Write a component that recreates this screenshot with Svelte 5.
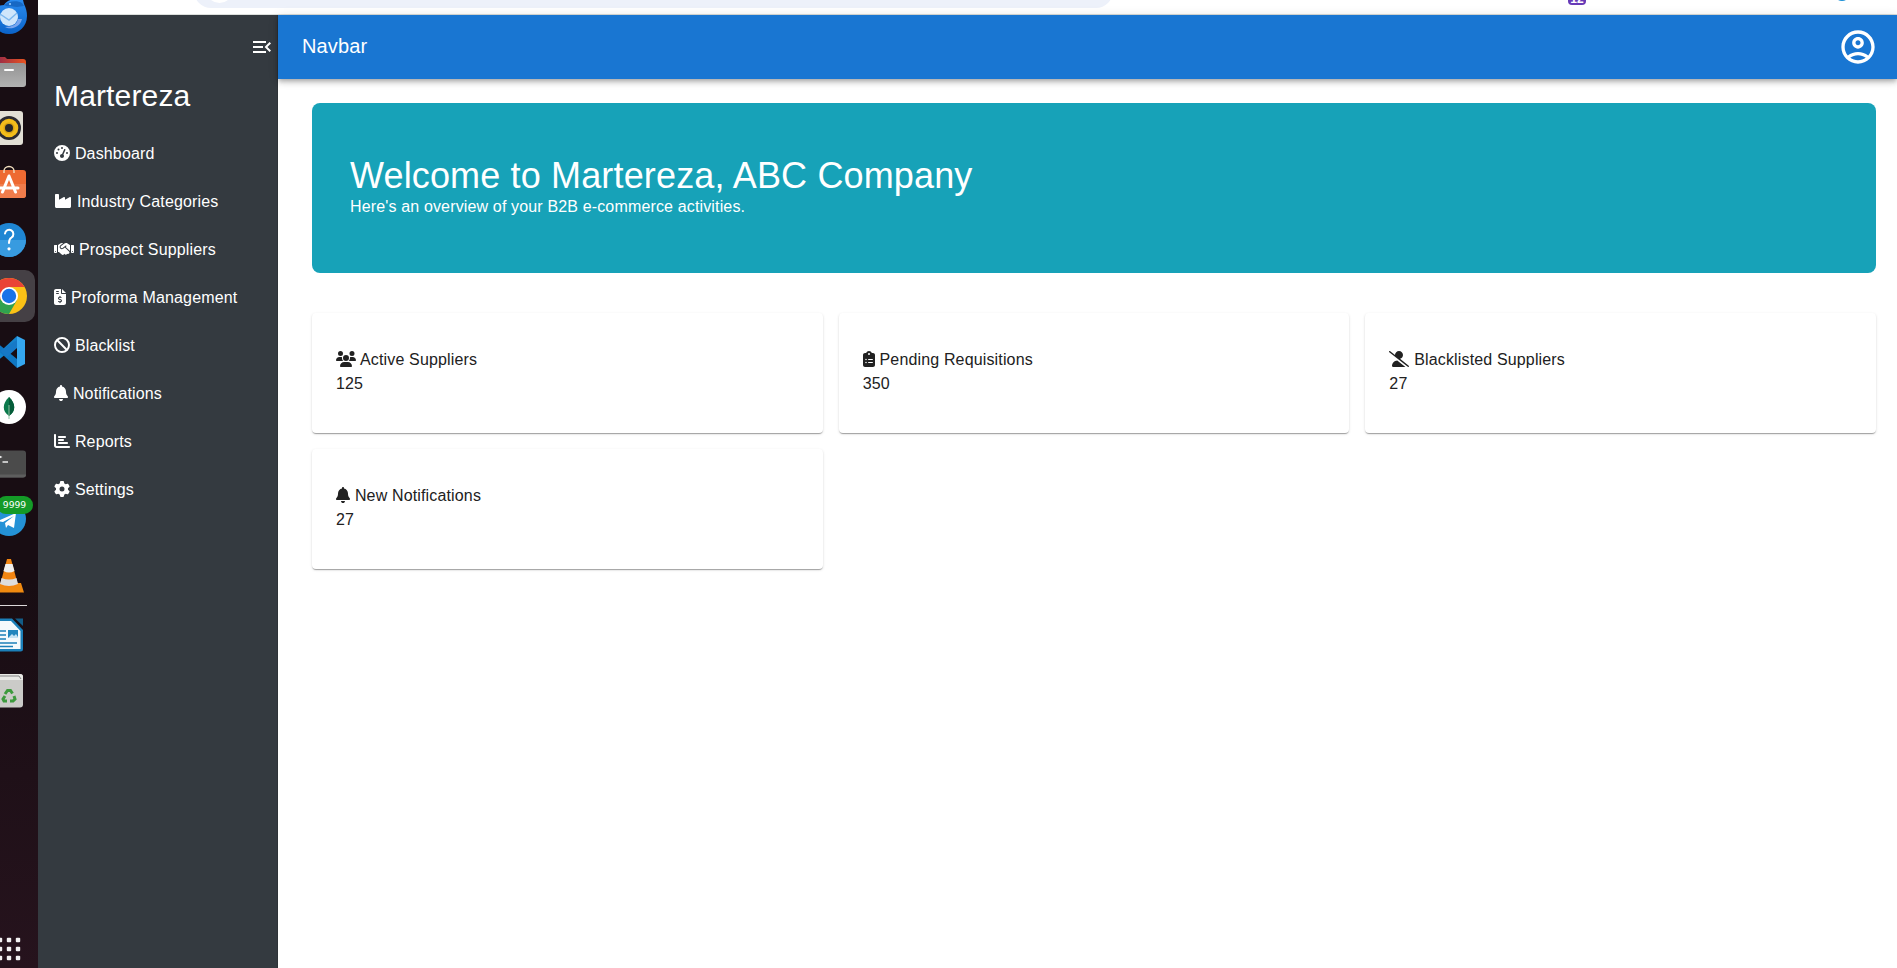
<script>
  const icons = {
    gauge: [512, 'M0 256a256 256 0 1 1 512 0A256 256 0 1 1 0 256zM288 96a32 32 0 1 0 -64 0 32 32 0 1 0 64 0zM256 416c35.3 0 64-28.7 64-64c0-17.4-6.9-33.1-18.1-44.6L366 161.7c5.3-12.1-.2-26.3-12.3-31.6s-26.3 .2-31.6 12.3L257.9 288c-.6 0-1.3 0-1.9 0c-35.3 0-64 28.7-64 64s28.7 64 64 64zM176 144a32 32 0 1 0 -64 0 32 32 0 1 0 64 0zM96 288a32 32 0 1 0 0-64 32 32 0 1 0 0 64zm352-32a32 32 0 1 0 -64 0 32 32 0 1 0 64 0z'],
    industry: [576, 'M64 32C46.3 32 32 46.3 32 64V304v48 80c0 26.5 21.5 48 48 48H496c26.5 0 48-21.5 48-48V304 152.2c0-18.2-19.4-29.7-35.4-21.1L352 215.4V152.2c0-18.2-19.4-29.7-35.4-21.1L160 215.4V64c0-17.7-14.3-32-32-32H64z'],
    handshake: [640, 'M323.4 85.2l-96.8 78.4c-16.1 13-19.2 36.4-7 53.1c12.9 17.8 38 21.3 55.3 7.8l99.3-77.2c7-5.4 17-4.2 22.5 2.8s4.2 17-2.8 22.5l-20.9 16.2L512 316.8V128h-.7l-3.9-2.5L434.8 79c-15.3-9.8-33.2-15-51.4-15c-21.8 0-43 7.5-60 21.2zm22.8 124.4l-51.7 40.2C263 274.3 217.3 268 193.7 235.6c-22.2-30.5-16.6-73.1 12.7-96.8l83.2-67.3c-11.6-4.9-24.1-7.4-36.8-7.4C234 64 215.7 69.6 200 80l-72 48V352h28.2l91.4 83.4c19.6 17.9 49.9 16.5 67.8-3.1c5.5-6.1 9.2-13.2 11.1-20.6l17 15.6c19.5 17.9 49.9 16.6 67.8-2.9c4.5-4.9 7.8-10.6 9.9-16.5c19.4 13 45.8 10.3 62.1-7.5c17.9-19.5 16.6-49.9-2.9-67.8l-134.2-123zM16 128c-8.8 0-16 7.2-16 16V352c0 17.7 14.3 32 32 32H64c17.7 0 32-14.3 32-32V128H16zM48 320a16 16 0 1 1 0 32 16 16 0 1 1 0-32zM544 128V352c0 17.7 14.3 32 32 32h32c17.7 0 32-14.3 32-32V144c0-8.8-7.2-16-16-16H544zm32 208a16 16 0 1 1 32 0 16 16 0 1 1 -32 0z'],
    invoice: [384, 'M64 0C28.7 0 0 28.7 0 64V448c0 35.3 28.7 64 64 64H320c35.3 0 64-28.7 64-64V160H256c-17.7 0-32-14.3-32-32V0H64zM256 0V128H384L256 0zM64 80c0-8.8 7.2-16 16-16h64c8.8 0 16 7.2 16 16s-7.2 16-16 16H80c-8.8 0-16-7.2-16-16zm0 64c0-8.8 7.2-16 16-16h64c8.8 0 16 7.2 16 16s-7.2 16-16 16H80c-8.8 0-16-7.2-16-16zm128 72c8.8 0 16 7.2 16 16v17.3c8.5 1.2 16.7 3.1 24.1 5.1c8.5 2.3 13.6 11 11.3 19.6s-11 13.6-19.6 11.3c-11.1-3-22-5.2-32.1-5.3c-8.4-.1-17.4 1.8-23.6 5.5c-5.7 3.4-8.1 7.3-8.1 12.8c0 3.7 1.3 6.5 7.3 10.1c6.9 4.1 16.6 7.1 29.2 10.9l.5 .1 0 0 0 0c11.3 3.4 25.3 7.6 36.3 14.6c12.1 7.6 22.4 19.7 22.7 38.2c.3 19.3-9.6 33.3-22.9 41.6c-7.7 4.8-16.4 7.6-25.1 9.1V440c0 8.8-7.2 16-16 16s-16-7.2-16-16V422.2c-11.2-2.1-21.7-5.7-30.9-8.9l0 0c-2.1-.7-4.2-1.4-6.2-2.1c-8.4-2.8-12.9-11.9-10.1-20.2s11.9-12.9 20.2-10.1c2.5 .8 4.8 1.6 7.1 2.4l0 0 0 0 0 0c13.6 4.6 24.6 8.4 36.3 8.7c9.1 .3 17.9-1.7 23.7-5.3c5.1-3.2 7.9-7.3 7.8-14c-.1-4.6-1.8-7.8-7.7-11.6c-6.8-4.3-16.5-7.4-29-11.2l-1.6-.5 0 0c-11-3.3-24.3-7.3-34.8-13.7c-12-7.2-22.6-18.9-22.7-37.3c-.1-19.4 10.8-32.8 23.8-40.5c7.5-4.4 15.8-7.2 24.1-8.7V232c0-8.8 7.2-16 16-16z'],
    ban: [512, 'M367.2 412.5L99.5 144.8C77.1 176.1 64 214.5 64 256c0 106 86 192 192 192c41.5 0 79.9-13.1 111.2-35.5zm45.3-45.3C434.9 335.9 448 297.5 448 256c0-106-86-192-192-192c-41.5 0-79.9 13.1-111.2 35.5L412.5 367.2zM0 256a256 256 0 1 1 512 0A256 256 0 1 1 0 256z'],
    bell: [448, 'M224 0c-17.7 0-32 14.3-32 32V51.2C119 66 64 130.6 64 208v18.8c0 47-17.3 92.4-48.5 127.6l-7.4 8.3c-8.4 9.4-10.4 22.9-5.3 34.4S19.4 416 32 416H416c12.6 0 24-7.4 29.2-18.9s3.1-25-5.3-34.4l-7.4-8.3C401.3 319.2 384 273.9 384 226.8V208c0-77.4-55-142-128-156.8V32c0-17.7-14.3-32-32-32zm45.3 493.3c12-12 18.7-28.3 18.7-45.3H224 160c0 17 6.7 33.3 18.7 45.3s28.3 18.7 45.3 18.7s33.3-6.7 45.3-18.7z'],
    chart: [512, 'M32 32c17.7 0 32 14.3 32 32V400c0 8.8 7.2 16 16 16H480c17.7 0 32 14.3 32 32s-14.3 32-32 32H80c-44.2 0-80-35.8-80-80V64C0 46.3 14.3 32 32 32zm96 96c0-17.7 14.3-32 32-32l192 0c17.7 0 32 14.3 32 32s-14.3 32-32 32H160c-17.7 0-32-14.3-32-32zm32 64H288c17.7 0 32 14.3 32 32s-14.3 32-32 32H160c-17.7 0-32-14.3-32-32s14.3-32 32-32zm0 96H416c17.7 0 32 14.3 32 32s-14.3 32-32 32H160c-17.7 0-32-14.3-32-32s14.3-32 32-32z'],
    gear: [512, 'M495.9 166.6c3.2 8.7 .5 18.4-6.4 24.6l-43.3 39.4c1.1 8.3 1.7 16.8 1.7 25.4s-.6 17.1-1.7 25.4l43.3 39.4c6.9 6.2 9.6 15.9 6.4 24.6c-4.4 11.9-9.7 23.3-15.8 34.3l-4.7 8.1c-6.6 11-14 21.4-22.1 31.2c-5.9 7.2-15.7 9.6-24.5 6.8l-55.7-17.7c-13.4 10.3-28.2 18.9-44 25.4l-12.5 57.1c-2 9.1-9 16.3-18.2 17.8c-13.8 2.3-28 3.5-42.5 3.5s-28.7-1.2-42.5-3.5c-9.2-1.5-16.2-8.7-18.2-17.8l-12.5-57.1c-15.8-6.5-30.6-15.1-44-25.4L83.1 425.9c-8.8 2.8-18.6 .3-24.5-6.8c-8.1-9.8-15.5-20.2-22.1-31.2l-4.7-8.1c-6.1-11-11.4-22.4-15.8-34.3c-3.2-8.7-.5-18.4 6.4-24.6l43.3-39.4C64.6 273.1 64 264.6 64 256s.6-17.1 1.7-25.4L22.4 191.2c-6.9-6.2-9.6-15.9-6.4-24.6c4.4-11.9 9.7-23.3 15.8-34.3l4.7-8.1c6.6-11 14-21.4 22.1-31.2c5.9-7.2 15.7-9.6 24.5-6.8l55.7 17.7c13.4-10.3 28.2-18.9 44-25.4l12.5-57.1c2-9.1 9-16.3 18.2-17.8C227.3 1.2 241.5 0 256 0s28.7 1.2 42.5 3.5c9.2 1.5 16.2 8.7 18.2 17.8l12.5 57.1c15.8 6.5 30.6 15.1 44 25.4l55.7-17.7c8.8-2.8 18.6-.3 24.5 6.8c8.1 9.8 15.5 20.2 22.1 31.2l4.7 8.1c6.1 11 11.4 22.4 15.8 34.3zM256 336a80 80 0 1 0 0-160 80 80 0 1 0 0 160z'],
    users: [640, 'M144 0a80 80 0 1 1 0 160A80 80 0 1 1 144 0zM512 0a80 80 0 1 1 0 160A80 80 0 1 1 512 0zM0 298.7C0 239.8 47.8 192 106.7 192h42.7c15.9 0 31 3.5 44.6 9.7c-1.3 7.2-1.9 14.7-1.9 22.3c0 38.2 16.8 72.5 43.3 96c-.2 0-.4 0-.7 0H21.3C9.6 320 0 310.4 0 298.7zM405.3 320c-.2 0-.4 0-.7 0c26.6-23.5 43.3-57.8 43.3-96c0-7.6-.7-15-1.9-22.3c13.6-6.3 28.7-9.7 44.6-9.7h42.7C592.2 192 640 239.8 640 298.7c0 11.8-9.6 21.3-21.3 21.3H405.3zM224 224a96 96 0 1 1 192 0 96 96 0 1 1 -192 0zM128 485.3C128 411.7 187.7 352 261.3 352H378.7C452.3 352 512 411.7 512 485.3c0 14.7-11.9 26.7-26.7 26.7H154.7c-14.7 0-26.7-11.9-26.7-26.7z'],
    clipboard: [384, 'M192 0c-41.8 0-77.4 26.7-90.5 64H64C28.7 64 0 92.7 0 128V448c0 35.3 28.7 64 64 64H320c35.3 0 64-28.7 64-64V128c0-35.3-28.7-64-64-64H282.5C269.4 26.7 233.8 0 192 0zm0 64a32 32 0 1 1 0 64 32 32 0 1 1 0-64zM72 272a24 24 0 1 1 48 0 24 24 0 1 1 -48 0zm104-16H304c8.8 0 16 7.2 16 16s-7.2 16-16 16H176c-8.8 0-16-7.2-16-16s7.2-16 16-16zM72 368a24 24 0 1 1 48 0 24 24 0 1 1 -48 0zm88 0c0-8.8 7.2-16 16-16H304c8.8 0 16 7.2 16 16s-7.2 16-16 16H176c-8.8 0-16-7.2-16-16z'],
    userSlash: [640, 'M38.8 5.1C28.4-3.1 13.3-1.2 5.1 9.2S-1.2 34.7 9.2 42.9l592 464c10.4 8.2 25.5 6.3 33.7-4.1s6.3-25.5-4.1-33.7L353.3 251.6C407.9 237 448 187.2 448 128C448 57.3 390.7 0 320 0C250.2 0 193.5 55.8 192 125.2L38.8 5.1zM264.3 304.3C170.5 309.4 96 387.2 96 482.3c0 16.4 13.3 29.7 29.7 29.7H514.3c3.9 0 7.6-.7 11-2.1l-261-205.6z'],
  };

  const menu = [
    ['gauge', 'Dashboard'],
    ['industry', 'Industry Categories'],
    ['handshake', 'Prospect Suppliers'],
    ['invoice', 'Proforma Management'],
    ['ban', 'Blacklist'],
    ['bell', 'Notifications'],
    ['chart', 'Reports'],
    ['gear', 'Settings'],
  ];

  const cards = [
    ['users', 'Active Suppliers', 125],
    ['clipboard', 'Pending Requisitions', 350],
    ['userSlash', 'Blacklisted Suppliers', 27],
    ['bell', 'New Notifications', 27],
  ];

  const dots = [-9, 0, 9];
</script>

{#snippet icon(name)}
  <svg class="fa" viewBox="0 0 {icons[name][0]} 512" style="width: {icons[name][0] / 512}em" aria-hidden="true"><path d={icons[name][1]} /></svg>
{/snippet}

<div class="screen">
  <aside class="dock">
    <div class="cell">
      <svg viewBox="-26 -26 52 52">
        <defs><linearGradient id="tb" x1="0" y1="0" x2="0" y2="1"><stop offset="0" stop-color="#2b8cf0" /><stop offset="1" stop-color="#0b63c9" /></linearGradient></defs>
        <path d="M-18-3C-15-9-9-11-5-11C-2-16 4-18 14-16L15-12C17-8 18-4 18 0A18 18 0 0 1-18 0Z" fill="url(#tb)" />
        <path d="M-5-11C0-15 8-16 13-13L15-10 8-9C2-10-2-9-5-11Z" fill="#1768c4" />
        <circle cx="0" cy="1" r="9" fill="#cfe6fb" />
        <path d="M-9-2L0 4 8-3" fill="none" stroke="#7db8ee" stroke-width="1.4" />
        <path d="M9 3C8 8 4 11-4 11 1 14 11 12 13 3Z" fill="#7aa6ee" />
        <circle cx="1" cy="-12" r="1" fill="#9fd0ff" />
      </svg>
    </div>
    <div class="cell">
      <svg viewBox="-26 -26 52 52">
        <defs>
          <linearGradient id="tab"><stop offset="0" stop-color="#8a2450" /><stop offset="1" stop-color="#e95420" /></linearGradient>
          <linearGradient id="fold" x1="0" y1="0" x2="0" y2="1"><stop offset="0" stop-color="#939393" /><stop offset="1" stop-color="#b2b2b2" /></linearGradient>
        </defs>
        <path d="M-17-15H-4L-2-13H14Q17-13 17-10V0H-17Z" fill="url(#tab)" />
        <rect x="-17" y="-9" width="34" height="24" rx="3" fill="url(#fold)" />
        <path d="M-4-2H4" stroke="#fff" stroke-width="2" stroke-linecap="round" />
      </svg>
    </div>
    <div class="cell">
      <svg viewBox="-26 -26 52 52">
        <rect x="-14" y="-17" width="28" height="34" rx="3" fill="#e2dfd5" />
        <circle r="12" fill="#2b2a31" /><circle r="9.3" fill="#f3bd1b" /><circle r="5.5" fill="#d9a313" /><circle r="4" fill="#26272b" />
      </svg>
    </div>
    <div class="cell">
      <svg viewBox="-26 -26 52 52">
        <rect x="-17" y="-14" width="34" height="28" rx="3" fill="#ee6a32" />
        <path d="M-17 0H17V11Q17 14 14 14H-14Q-17 14-17 11Z" fill="#f07c4b" />
        <path d="M-5-11V-13A5 4.5 0 0 1 5-13V-11" fill="none" stroke="#f1dfbf" stroke-width="1.4" />
        <path d="M-6.500 8L0-8 6.500 8M-9 4H9" fill="none" stroke="#fff" stroke-width="3" stroke-linecap="round" stroke-linejoin="round" />
      </svg>
    </div>
    <div class="cell">
      <svg viewBox="-26 -26 52 52">
        <circle r="17" fill="#1f86d3" />
        <path d="M-17 0A17 17 0 0 0 17 0Z" fill="#389be0" />
        <path d="M-4-6.500A4.200 4.200 0 1 1 2.500-2.500Q0-1 0 3" fill="none" stroke="#fff" stroke-width="2" stroke-linecap="round" />
        <circle cy="8.8" r="1.6" fill="#fff" />
      </svg>
    </div>
    <div class="cell">
      <svg class="active" viewBox="-26 -26 52 52">
        <circle r="18" fill="#fbc116" />
        <path d="M-15.6-9A18 18 0 0 1 15.6-9H0L-7.8 4.5Z" fill="#ea4335" />
        <path d="M-15.6-9A18 18 0 0 0 0 18L7.8 4.5-7.8 4.5Z" fill="#30a24f" />
        <circle r="9" fill="#fff" /><circle r="7.2" fill="#1a73e8" />
      </svg>
    </div>
    <div class="cell">
      <svg viewBox="-26 -26 52 52">
        <path d="M8-16L16-12V12L8 16Z" fill="#35a7f0" />
        <path d="M8-16V-7L-13 10-17 7Z" fill="#1583cc" />
        <path d="M8 16V7L-13-10-17-7Z" fill="#0f77c2" />
        <path d="M-9-1L-2 5 8-4V-12Z" fill="#1678c6" />
      </svg>
    </div>
    <div class="cell">
      <svg viewBox="-26 -26 52 52">
        <circle cy="-1" r="17" fill="#fff" />
        <path d="M0-11C7-4 7 3 0 8-7 3-7-4 0-11Z" fill="#0c7a4d" />
        <path d="M0-11C7-4 7 3 0 8Z" fill="#055c39" />
        <path d="M0-3V11" stroke="#8fc3a5" />
      </svg>
    </div>
    <div class="cell">
      <svg viewBox="-26 -26 52 52">
        <rect x="-17" y="-13.500" width="34" height="27" rx="3" fill="#4b4b4b" />
        <path d="M-17 10.500H17Q17 13.500 14 13.500H-14Q-17 13.500-17 10.500Z" fill="#5e5e5e" />
        <path d="M-12-9L-8-7-12-5M-6.500-2H-1" fill="none" stroke="#ededed" stroke-width="1.300" />
      </svg>
    </div>
    <div class="cell">
      <svg viewBox="-26 -26 52 52">
        <circle cy="-1" r="17" fill="#2492d6" />
        <path d="M-11 1L7-7 5 8-1 5-3 8-4 3 5-4-6 2Z" fill="#fff" />
      </svg>
      <span class="badge">9999</span>
    </div>
    <div class="cell">
      <svg viewBox="-26 -26 52 52">
        <path d="M-12 7H12L15 16.500H-15Z" fill="#f08a10" />
        <path d="M-2-17H2L9 9Q0 14-9 9Z" fill="#f28512" />
        <path d="M-3.500-12H3.500L5.500-5Q0-2-5.500-5Z" fill="#eee" />
        <path d="M-7.500 2Q0 5 7.500 2L9 8Q0 12-9 8Z" fill="#ddd" />
      </svg>
    </div>
    <div class="rule"></div>
    <div class="cell">
      <svg viewBox="-26 -26 52 52">
        <path d="M-14-16.500H3L14-5V14Q14 16.500 11.500 16.500H-14Z" fill="#1b7fb8" />
        <path d="M-14-14H2L11.500-4V14H-14Z" fill="#f4f9fc" />
        <path d="M6-16.500H14V-9Z" fill="#125c87" />
        <path d="M-14-4H-3M-14 0H-3M-14 4H-3M-14 8H8M-14 11.500H4" stroke="#1b7fb8" stroke-width="1.400" />
        <rect x="-1" y="-5" width="10" height="8" fill="#2285bd" /><path d="M-1 3L3-1 5 1 7-1 9 2V3Z" fill="#c4e2f3" />
      </svg>
    </div>
    <div class="cell">
      <svg viewBox="-26 -26 52 52">
        <rect x="-14" y="-17" width="28" height="33.500" rx="3" fill="#cbcbc8" />
        <path d="M-14-14Q-14-17-11-17H11Q14-17 14-14V-11H-14Z" fill="#e9e9e6" />
        <path d="M-11-15H10L12-12" fill="none" stroke="#858585" />
        <g transform="translate(0 5)" fill="none" stroke="#3d9a3d" stroke-width="3">
          <path d="M-4-2L-1.500-5.500H1.500L3.500-2.500" /><path d="M5 0L6 3 4 5H1" /><path d="M-2 5H-5L-6 3-4 0" />
        </g>
      </svg>
    </div>
    <div class="cell apps">
      <svg viewBox="-26 -26 52 52">
        {#each dots as y}{#each dots as x}<rect x={x - 2.2} y={y - 2.2} width="4.400" height="4.400" rx="1" fill="#f4f2f3" />{/each}{/each}
      </svg>
    </div>
  </aside>

  <div class="window">
    <div class="chrome">
      <div class="address"><i></i></div>
      <div class="ext">12</div>
      <div class="profile"></div>
    </div>
    <div class="app">
      <nav class="sidebar">
        <div class="toggle">
          <svg viewBox="0 0 24 24" width="24" height="24" fill="currentColor"><path d="M3 18h13v-2H3v2zM3 6v2h13V6H3zm0 7h10v-2H3v2zm18 2.590L17.420 12 21 8.410 19.590 7l-5 5 5 5L21 15.590z" /></svg>
        </div>
        <h2>Martereza</h2>
        <ul>
          {#each menu as [glyph, label]}
            <li>{@render icon(glyph)} {label}</li>
          {/each}
        </ul>
      </nav>
      <div class="page">
        <header>
          <span>Navbar</span>
          <svg viewBox="0 0 24 24" width="40" height="40" fill="currentColor"><path d="M12 2C6.480 2 2 6.480 2 12s4.480 10 10 10 10-4.480 10-10S17.520 2 12 2zM7.350 18.500C8.660 17.560 10.260 17 12 17s3.340.560 4.650 1.500c-1.310.940-2.910 1.500-4.650 1.500s-3.340-.560-4.650-1.500zm10.790-1.380C16.450 15.800 14.320 15 12 15s-4.450.800-6.140 2.120C4.700 15.730 4 13.950 4 12c0-4.420 3.580-8 8-8s8 3.580 8 8c0 1.950-.700 3.730-1.860 5.120z" /><path d="M12 6c-1.930 0-3.500 1.570-3.500 3.500S10.070 13 12 13s3.500-1.570 3.500-3.500S13.930 6 12 6zm0 5c-.830 0-1.500-.670-1.500-1.500S11.170 8 12 8s1.500.670 1.500 1.500S12.830 11 12 11z" /></svg>
        </header>
        <main>
          <section class="banner">
            <h1>Welcome to Martereza, ABC Company</h1>
            <p>Here's an overview of your B2B e-commerce activities.</p>
          </section>
          <section class="cards">
            {#each cards as [glyph, label, value]}
              <article>
                <p>{@render icon(glyph)} {label}</p>
                <p>{value}</p>
              </article>
            {/each}
          </section>
        </main>
      </div>
    </div>
  </div>
</div>

<style>
  * { box-sizing: border-box; margin: 0; padding: 0; }
  .screen {
    display: flex;
    height: 968px;
    overflow: hidden;
    background: #fff;
    font: 16px/24px "Liberation Sans", Arial, sans-serif;
    letter-spacing: 0.15px;
  }
  .dock {
    display: flex;
    flex-direction: column;
    width: 38px;
    flex: none;
    overflow: hidden;
    background: linear-gradient(#180d13 0, #180d13 60%, #26131d 100%);
  }
  .cell { position: relative; display: grid; place-items: center; flex: none; width: 56px; height: 56px; margin-left: -19px; }
  .cell:first-child { margin-top: -12px; }
  .cell svg { width: 52px; height: 52px; }
  .cell svg.active { background: #454045; border-radius: 10px; }
  .cell.apps { margin-top: auto; margin-bottom: -9px; }
  .badge {
    position: absolute; left: 16px; top: 4px; width: 36px; height: 18px; padding-right: 1px;
    border-radius: 9px; background: #149a27; color: #fff;
    font: 9.200px/18px "DejaVu Sans", sans-serif; letter-spacing: 0; text-align: center;
  }
  .rule { width: 27px; height: 1px; flex: none; margin: 1px 0; background: #dcd8da; }

  .window { flex: 1; display: flex; flex-direction: column; min-width: 0; }
  .chrome { display: flex; height: 15px; flex: none; overflow: hidden; border-bottom: 1px solid #dcdfdc; }
  .address { width: 919px; height: 34px; flex: none; margin: -26px 0 0 156px; border-radius: 17px; background: #edf1fa; }
  .address i { display: block; width: 27px; height: 27px; margin: 2px 0 0 12px; border-radius: 50%; background: #fff; }
  .ext { width: 18px; height: 16px; margin: -11px 0 0 455px; border-radius: 4px; background: #673ab7; color: #fff; font-weight: 700; font-size: 12px; line-height: 21px; text-align: center; letter-spacing: 0; }
  .profile { width: 16px; height: 16px; margin: -15px 0 0 248px; border-radius: 50%; background: #1a8fd6; }

  .app { flex: 1; display: flex; }
  .sidebar { width: 240px; flex: none; padding: 0 16px; background: #343a40; color: #fff; border-right: 1px solid #2e3338; }
  .toggle { display: flex; justify-content: flex-end; margin-right: -13px; padding-top: 20px; }
  .toggle svg { display: block; }
  h2 { margin-top: 14px; font-size: 30px; font-weight: 400; line-height: 45px; }
  ul { list-style: none; margin-top: 12px; }
  li { height: 48px; padding: 12px 0; white-space: nowrap; }
  .fa { display: inline-block; height: 1em; margin-right: 0.3px; overflow: visible; vertical-align: -0.125em; fill: currentColor; }

  .page { flex: 1; min-width: 0; }
  header {
    position: relative; display: flex; align-items: center; justify-content: space-between;
    height: 64px; padding: 0 19px 0 24px; background: #1976d2; color: #fff; font-size: 20px;
    box-shadow: 0 2px 4px -1px rgba(0, 0, 0, 0.2), 0 4px 5px 0 rgba(0, 0, 0, 0.14), 0 1px 10px 0 rgba(0, 0, 0, 0.12);
  }
  header span { padding-bottom: 2px; }
  main { padding: 24px 21px 0 34px; color: #212121; }
  .banner { height: 170px; padding: 53px 38px 0; border-radius: 8px; background: #17a2b8; color: #fff; }
  h1 { height: 39px; font-size: 36px; font-weight: 400; line-height: 40px; }
  .cards { display: grid; grid-template-columns: repeat(3, 1fr); gap: 16px; margin-top: 40px; }
  article {
    height: 120px; padding: 35px 24px; border-radius: 4px; background: #fff;
    box-shadow: 0 2px 1px -1px rgba(0, 0, 0, 0.2), 0 1px 1px 0 rgba(0, 0, 0, 0.14), 0 1px 3px 0 rgba(0, 0, 0, 0.12);
  }
</style>
